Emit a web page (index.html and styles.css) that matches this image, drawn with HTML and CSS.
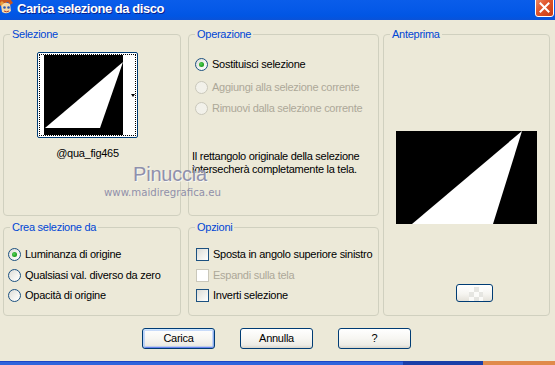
FILE: index.html
```html
<!DOCTYPE html>
<html lang="it">
<head>
<meta charset="utf-8">
<title>Carica selezione da disco</title>
<link rel="stylesheet" href="styles.css">
</head>
<body>
<div class="titlebar">
  <svg class="appicon" width="14" height="16" viewBox="0 0 14 16">
    <path d="M0 0 H11 L13 3 L10 5 L8 2 L3 4 L0 6 Z" fill="#C8561E"/>
    <path d="M1 5 Q5 1 10 4 L11 11 Q7 15 2 12 Z" fill="#F6D9A8"/>
    <circle cx="4.5" cy="7.5" r="1.3" fill="#2B5BB8"/>
    <circle cx="8.5" cy="7.5" r="1.3" fill="#2B5BB8"/>
    <path d="M4 11 Q6.5 12.5 9 11" stroke="#B0402A" stroke-width="1" fill="none"/>
    <path d="M0 3 L2 1 L4 3 L1 6 Z" fill="#E8A040"/>
  </svg>
  <span class="title">Carica selezione da disco</span>
  <div class="close">
    <svg width="19" height="17" viewBox="0 0 19 17">
      <defs>
        <linearGradient id="cg" x1="0" y1="0" x2="1" y2="1">
          <stop offset="0" stop-color="#F0926E"/>
          <stop offset="0.45" stop-color="#E0552C"/>
          <stop offset="1" stop-color="#C43A12"/>
        </linearGradient>
      </defs>
      <path d="M0.5 -3 H18.5 V14 Q18.5 16.5 16 16.5 H3 Q0.5 16.5 0.5 14 Z" fill="url(#cg)" stroke="#FFFFFF" stroke-width="1"/>
      <path d="M5.5 3.5 L13.5 11.5 M13.5 3.5 L5.5 11.5" stroke="#FFFFFF" stroke-width="2" stroke-linecap="square"/>
    </svg>
  </div>
</div>

<div class="main">
  <div class="groups">
    <fieldset class="group g-sel">
      <legend>Selezione</legend>
      <div class="sel-content">
        <div class="thumb">
          <svg class="thumb-img" width="79" height="80" viewBox="0 0 79 80">
            <rect width="79" height="80" fill="#000"/>
            <polygon points="1,73 79,7 56,73" fill="#fff"/>
          </svg>
          <div class="thumb-side"><span class="arrow"></span></div>
        </div>
        <div class="thumb-name">@qua_fig465</div>
      </div>
    </fieldset>

    <fieldset class="group g-op">
      <legend>Operazione</legend>
      <div class="op-content">
        <div class="opt r1"><span class="radio checked"></span><span>Sostituisci selezione</span></div>
        <div class="opt r2 disabled"><span class="radio"></span><span>Aggiungi alla selezione corrente</span></div>
        <div class="opt r3 disabled"><span class="radio"></span><span>Rimuovi dalla selezione corrente</span></div>
        <p class="note">Il rettangolo originale della selezione<br>intersecherà completamente la tela.</p>
      </div>
    </fieldset>

    <fieldset class="group g-prev">
      <legend>Anteprima</legend>
      <div class="prev-content">
        <svg class="preview" width="141" height="93" viewBox="0 0 141 93">
          <rect width="141" height="93" fill="#000"/>
          <polygon points="126,0 16,93 97,93" fill="#fff"/>
        </svg>
        <div class="mini-btn"><span class="checker"></span></div>
      </div>
    </fieldset>

    <fieldset class="group g-crea">
      <legend>Crea selezione da</legend>
      <div class="crea-content">
        <div class="opt q1"><span class="radio checked"></span><span>Luminanza di origine</span></div>
        <div class="opt q2"><span class="radio"></span><span>Qualsiasi val. diverso da zero</span></div>
        <div class="opt q3"><span class="radio"></span><span>Opacità di origine</span></div>
      </div>
    </fieldset>

    <fieldset class="group g-opz">
      <legend>Opzioni</legend>
      <div class="opz-content">
        <div class="opt q1"><span class="check"></span><span>Sposta in angolo superiore sinistro</span></div>
        <div class="opt q2 disabled"><span class="check"></span><span>Espandi sulla tela</span></div>
        <div class="opt q3"><span class="check"></span><span>Inverti selezione</span></div>
      </div>
    </fieldset>
  </div>

  <div class="buttons">
    <div class="btn default">Carica</div>
    <div class="btn">Annulla</div>
    <div class="btn">?</div>
  </div>
</div>

<div class="taskbar"><span class="tb-mid"></span><span class="tb-tray"></span></div>

<div class="watermark">
  <div class="wm-name">Pinuccia</div>
  <div class="wm-url">www.maidiregrafica.eu</div>
</div>
</body>
</html>
```

FILE: styles.css
```css
* { box-sizing: border-box; }
html, body { margin: 0; padding: 0; }
body {
  width: 555px;
  height: 365px;
  overflow: hidden;
  position: relative;
  background: #ECE9D8;
  font-family: "Liberation Sans", Arial, sans-serif;
  font-size: 11px;
  letter-spacing: -0.27px;
  color: #000;
}

/* title bar */
.titlebar {
  height: 20px;
  display: flex;
  align-items: flex-start;
  background: linear-gradient(#0A5DEA 0%, #0559E8 45%, #0156E4 80%, #0A52D8 100%);
  color: #fff;
}
.appicon { flex: none; display: block; }
.title {
  margin-left: 3px;
  font-weight: bold;
  font-size: 13px;
  letter-spacing: -0.45px;
  line-height: 17px;
  text-shadow: 1px 1px 0 #0A1F8C;
}
.close { margin-left: auto; margin-right: 1px; width: 19px; height: 17px; }
.close svg { display: block; }

/* main */
.main { padding: 8px 0 0 3px; }
.groups {
  display: grid;
  grid-template-columns: 178px 7px 191px 4px 167px;
  grid-template-rows: 188px 5px 95px;
}
.group {
  margin: 0;
  padding: 0;
  min-width: 0;
  height: 100%;
  border: 1px solid #D0D0BF;
  border-radius: 4px;
}
.group legend {
  margin-left: 6px;
  padding: 0 2px;
  color: #0046D5;
  line-height: 13px;
}
.g-sel { grid-column: 1; grid-row: 1; }
.g-op { grid-column: 3; grid-row: 1; }
.g-prev { grid-column: 5; grid-row: 1 / 4; }
.g-crea { grid-column: 1; grid-row: 3; }
.g-opz { grid-column: 3; grid-row: 3; }

/* selezione */
.sel-content { padding: 11px 0 0 33px; }
.thumb {
  width: 101px;
  height: 86px;
  border: 1px solid #003C74;
  border-radius: 2px;
  background: #fff;
  display: flex;
  padding: 2px 0 0 6px;
  outline: 1px dotted #000;
  outline-offset: -3px;
}
.thumb-img { display: block; flex: none; }
.thumb-side {
  flex: 1;
  display: flex;
  align-items: center;
  padding-left: 8px;
  height: 80px;
}
.arrow {
  width: 0;
  height: 0;
  border-left: 2.5px solid transparent;
  border-right: 2.5px solid transparent;
  border-top: 3px solid #000;
}
.thumb-name {
  width: 101px;
  margin-top: 9px;
  text-align: center;
  line-height: 13px;
}

/* options rows */
.opt {
  display: flex;
  align-items: center;
  gap: 4px;
  height: 13px;
  line-height: 13px;
  white-space: nowrap;
}
.opt.disabled { color: #ACA899; }
.radio {
  flex: none;
  width: 13px;
  height: 13px;
  border-radius: 50%;
  border: 1px solid #1C5180;
  background: linear-gradient(135deg, #DCDCD7 0%, #F4F4F1 60%, #FFFFFF 100%);
  display: flex;
  align-items: center;
  justify-content: center;
}
.radio.checked::after {
  content: "";
  width: 5px;
  height: 5px;
  border-radius: 50%;
  background: radial-gradient(circle at 40% 40%, #55D35A 0%, #21A121 60%, #1A8C1A 100%);
}
.disabled .radio { border-color: #CAC8BB; background: #F2F1EA; }
.check {
  flex: none;
  width: 13px;
  height: 13px;
  border: 1px solid #1C5180;
  background: linear-gradient(135deg, #DCDCD7 0%, #F2F2EE 60%, #FFFFFF 100%);
}
.disabled .check { border-color: #CAC8BB; background: #FFFFFF; }

.op-content { padding-top: 17px; }
.op-content .opt { padding-left: 6px; }
.op-content .r2 { margin-top: 10px; }
.op-content .r3 { margin-top: 8px; }
.note {
  margin: 35px 0 0 0;
  padding-left: 3px;
  line-height: 13px;
  white-space: nowrap;
}

.crea-content { padding: 14px 0 0 4px; }
.opz-content { padding: 14px 0 0 7px; }
.q2 { margin-top: 8px; }
.q3 { margin-top: 7px; }

/* anteprima */
.prev-content { padding: 90px 0 0 12px; }
.preview { display: block; }
.mini-btn {
  margin: 60px 0 0 60px;
  width: 37px;
  height: 18px;
  border: 1px solid #003C74;
  border-radius: 3px;
  background: linear-gradient(#FFFFFF 0%, #F6F5F1 55%, #E4E2DA 100%);
  display: flex;
  align-items: flex-end;
  justify-content: center;
}
.checker {
  width: 14px;
  height: 14px;
  margin-left: 2px;
  background: repeating-conic-gradient(#E4E4E0 0 25%, #FCFCFA 0 50%) 0 0 / 10px 10px;
  opacity: 0.9;
}

/* buttons */
.buttons {
  display: flex;
  gap: 25px;
  margin-top: 12px;
  padding-left: 139px;
}
.btn {
  width: 73px;
  height: 21px;
  border: 1px solid #003C74;
  border-radius: 3px;
  background: linear-gradient(#FFFFFF 0%, #F7F6F2 50%, #ECEBE5 85%, #D8D4CA 100%);
  display: flex;
  align-items: center;
  justify-content: center;
  line-height: 13px;
}
.btn.default {
  box-shadow: inset 0 1px 0 #CEE7FF, inset 1px 0 0 #B8D2FA, inset -1px 0 0 #8AA9EE, inset 0 -1px 0 #6982EE, inset 0 0 0 2px rgba(164,195,246,0.6);
}

/* taskbar */
.taskbar {
  margin-top: 12px;
  height: 4px;
  display: flex;
  background: linear-gradient(#1B46C6 0, #1B46C6 1px, #2E64DC 1px);
}
.tb-mid { margin-left: 403px; width: 80px; background: #1A3FA8; }
.tb-tray { flex: 1; background: #E08A4A; }

/* watermark overlay */
.watermark {
  position: absolute;
  left: 104px;
  top: 164px;
  pointer-events: none;
}
.wm-name {
  margin-left: 29px;
  font-size: 20px;
  line-height: 20px;
  letter-spacing: -0.2px;
  color: #8F90AC;
  text-shadow: 1px 1px 0 rgba(255,255,255,0.7);
}
.wm-url {
  margin-top: 3px;
  font-family: "DejaVu Sans", Verdana, sans-serif;
  font-size: 10.2px;
  line-height: 12px;
  letter-spacing: 0;
  color: #9090AA;
}
```
